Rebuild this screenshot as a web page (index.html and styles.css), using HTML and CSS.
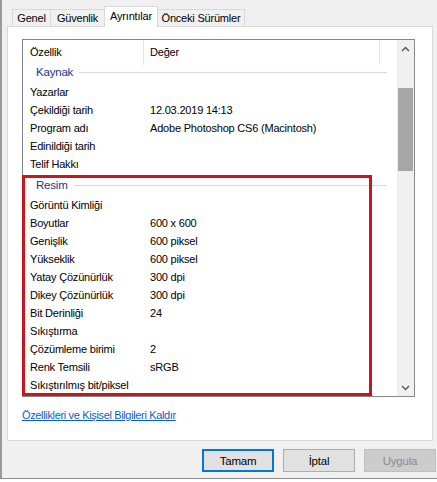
FILE: index.html
```html
<!DOCTYPE html>
<html lang="tr">
<head>
    <meta charset="UTF-8">
    <title>Özellikler - Ayrıntılar</title>
    <link rel="stylesheet" href="styles.css">
</head>
<body>
<div class="dialog">
    <div class="tabs">
        <div class="tab tab-genel">Genel</div>
        <div class="tab tab-guvenlik">Güvenlik</div>
        <div class="tab tab-detay active">Ayrıntılar</div>
        <div class="tab tab-onceki">Önceki Sürümler</div>
    </div>

    <div class="panel">
        <div class="list">
            <div class="list-body">
                <div class="list-head">
                    <div class="head-name">Özellik</div>
                    <div class="head-value">Değer</div>
                </div>

                <div class="group first"><span>Kaynak</span><i></i></div>
                <div class="row"><span class="name">Yazarlar</span><span class="value"></span></div>
                <div class="row"><span class="name">Çekildiği tarih</span><span class="value">12.03.2019 14:13</span></div>
                <div class="row"><span class="name">Program adı</span><span class="value">Adobe Photoshop CS6 (Macintosh)</span></div>
                <div class="row"><span class="name">Edinildiği tarih</span><span class="value"></span></div>
                <div class="row"><span class="name">Telif Hakkı</span><span class="value"></span></div>

                <div class="group"><span>Resim</span><i></i></div>
                <div class="row"><span class="name">Görüntü Kimliği</span><span class="value"></span></div>
                <div class="row"><span class="name">Boyutlar</span><span class="value">600 x 600</span></div>
                <div class="row"><span class="name">Genişlik</span><span class="value">600 piksel</span></div>
                <div class="row"><span class="name">Yükseklik</span><span class="value">600 piksel</span></div>
                <div class="row"><span class="name">Yatay Çözünürlük</span><span class="value">300 dpi</span></div>
                <div class="row"><span class="name">Dikey Çözünürlük</span><span class="value">300 dpi</span></div>
                <div class="row"><span class="name">Bit Derinliği</span><span class="value">24</span></div>
                <div class="row"><span class="name">Sıkıştırma</span><span class="value"></span></div>
                <div class="row"><span class="name">Çözümleme birimi</span><span class="value">2</span></div>
                <div class="row"><span class="name">Renk Temsili</span><span class="value">sRGB</span></div>
                <div class="row"><span class="name">Sıkıştırılmış bit/piksel</span><span class="value"></span></div>
            </div>

            <div class="scrollbar">
                <div class="scroll-btn">
                    <svg width="9" height="6" viewBox="0 0 9 6"><polyline points="1,5 4.5,1.5 8,5" fill="none" stroke="#5a5a5a" stroke-width="1.5"/></svg>
                </div>
                <div class="track"><div class="thumb"></div></div>
                <div class="scroll-btn">
                    <svg width="9" height="6" viewBox="0 0 9 6"><polyline points="1,1 4.5,4.5 8,1" fill="none" stroke="#5a5a5a" stroke-width="1.5"/></svg>
                </div>
            </div>

            <div class="highlight"></div>
        </div>

        <a class="remove-link" href="#">Özellikleri ve Kişisel Bilgileri Kaldır</a>
    </div>

    <div class="buttons">
        <button class="btn default">Tamam</button>
        <button class="btn">İptal</button>
        <button class="btn disabled">Uygula</button>
    </div>
</div>
</body>
</html>
```

FILE: styles.css
```css
body {
    margin: 0;
    background: #fff;
    font-family: "Liberation Sans", Arial, sans-serif;
    font-size: 11px;
    letter-spacing: -0.2px;
    color: #000;
}
.dialog {
    width: 435px;
    height: 478px;
    background: #f0f0f0;
    border-left: 2px solid #9a9a9a;
    border-bottom: 1px solid #8a8a8a;
}
.tabs {
    display: flex;
    align-items: flex-end;
    height: 26px;
    padding-left: 10px;
    position: relative;
    z-index: 2;
}
.tab {
    box-sizing: border-box;
    height: 17px;
    line-height: 16px;
    text-align: center;
    border: 1px solid #d9d9d9;
    border-bottom: none;
    background: #f0f0f0;
    margin-right: -1px;
}
.tab-genel { width: 39px; }
.tab-guvenlik { width: 55px; }
.tab-detay { width: 54px; }
.tab-onceki { width: 88px; }
.tab.active {
    height: 21px;
    line-height: 19px;
    background: #fff;
    margin-bottom: -1px;
}
.panel {
    box-sizing: border-box;
    width: 426px;
    height: 415px;
    margin-left: 5px;
    background: #fff;
    border: 1px solid #d9d9d9;
    padding: 12px 0 0 14px;
}
.list {
    position: relative;
    box-sizing: border-box;
    width: 393px;
    height: 358px;
    border: 1px solid #828790;
    display: flex;
}
.list-body {
    flex: 1;
    overflow: hidden;
}
.list-head {
    display: flex;
    height: 25px;
    line-height: 25px;
}
.head-name {
    box-sizing: border-box;
    width: 121px;
    padding-left: 7px;
    border-right: 1px solid #e5e5e5;
}
.head-value {
    box-sizing: border-box;
    width: 236px;
    padding-left: 6px;
    border-right: 1px solid #e5e5e5;
}
.group {
    display: flex;
    align-items: center;
    height: 14px;
    padding: 5px 10px 4px 13px;
    color: #1e3287;
    font-size: 11.5px;
}
.group.first {
    padding-top: 0;
}
.group i {
    flex: 1;
    height: 1px;
    margin-left: 6px;
    background: #d3dae6;
}
.row {
    display: flex;
    height: 18px;
    line-height: 18px;
    white-space: nowrap;
}
.row .name {
    width: 114px;
    padding-left: 7px;
}
.row .value {
    padding-left: 6px;
}
.scrollbar {
    width: 17px;
    background: #f0f0f0;
    display: flex;
    flex-direction: column;
}
.scroll-btn {
    height: 17px;
    display: flex;
    align-items: center;
    justify-content: center;
}
.track {
    flex: 1;
}
.thumb {
    width: 15px;
    height: 83px;
    margin: 31px 0 0 1px;
    background: #a6a6a6;
}
.highlight {
    position: absolute;
    left: -1px;
    top: 135px;
    width: 344px;
    height: 215px;
    border: 3px solid #c8161e;
}
.remove-link {
    display: inline-block;
    margin-top: 11px;
    line-height: 14px;
    letter-spacing: -0.35px;
    color: #0a5fc4;
    text-decoration: underline;
}
.buttons {
    display: flex;
    justify-content: flex-end;
    gap: 9px;
    padding: 8px 1px 0 0;
}
.btn {
    box-sizing: border-box;
    width: 72px;
    height: 23px;
    font-family: inherit;
    font-size: 11.5px;
    letter-spacing: -0.2px;
    color: #000;
    background: #e1e1e1;
    border: 1px solid #adadad;
    padding: 0;
}
.btn.default {
    border: 2px solid #0078d7;
}
.btn.disabled {
    background: #cccccc;
    border-color: #bfbfbf;
    color: #8a8a8a;
}
```
